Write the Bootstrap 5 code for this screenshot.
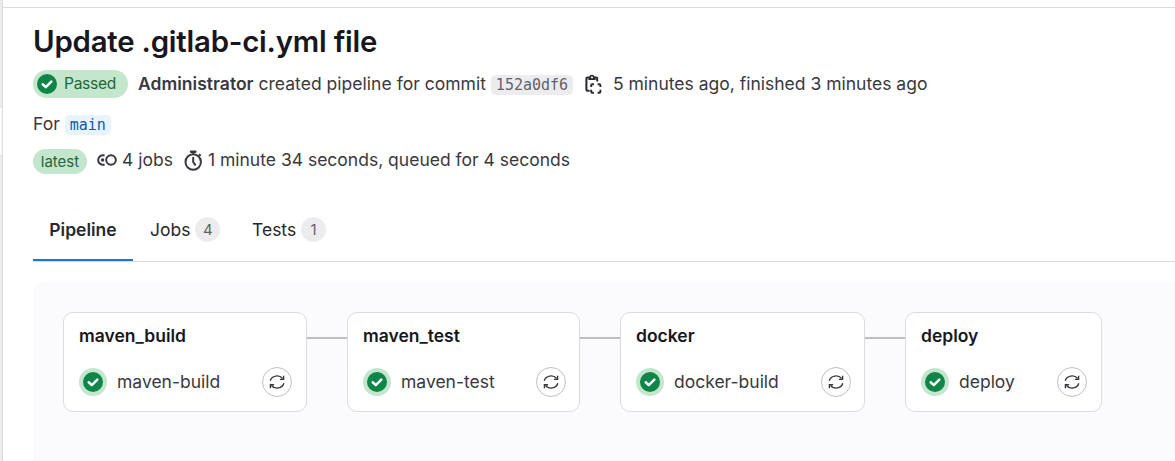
<!DOCTYPE html>
<html lang="en">
<head>
<meta charset="utf-8">
<title>Update .gitlab-ci.yml file</title>
<link href="https://cdn.jsdelivr.net/npm/bootstrap@5.3.0/dist/css/bootstrap.min.css" rel="stylesheet">
<style>
body{font-family:Inter,"Liberation Sans",sans-serif;font-size:17.5px;line-height:25px;color:#3a383f;background:#fff;overflow:hidden}
.shell{height:461px}
.rail{width:3px;border-right:1px solid #dcdcde;background:#ececef}
.rail-gap{margin-top:108px;height:48px;background:#fbfafd;border-bottom:1px solid #dcdcde}
.topline{height:8px;border-bottom:1px solid #dcdcde}
.page{padding-left:30px}
h1{font-size:29.4px;line-height:36px;font-weight:600;color:#18171d;margin:16px 0 0;letter-spacing:-.22px}
.line{white-space:pre}
.l1{height:28px;margin-top:10px}
.l2{height:26px;margin-top:13px}
.l3{height:26px;margin-top:11px}
.lift{margin-top:-2px}
.l3 .lift{margin-top:-3px}
.wide{letter-spacing:.025px}
b{font-weight:600}
.pill{background:#c3e6cd;color:#24663b;border-radius:14px}
.passed{width:95px;height:28px;padding-left:4px;font-size:15.6px;letter-spacing:-.3px}
.latest{width:54px;height:25px;font-size:15px;line-height:23px;padding-bottom:1px;margin-top:1px}
.mono{font-family:"DejaVu Sans Mono","Liberation Mono",monospace;font-size:15px;border-radius:5px;height:20px;line-height:20px;margin-top:1px}
.sha{background:#ececef;color:#626168;width:82px}
.ref{background:#e9f3fc;color:#0b5cad;width:46px}
.tabs{height:64px;margin-top:24px;border-bottom:1px solid #dcdcde;color:#28272d}
.tab-item{height:64px;padding-bottom:2px}
.tab-item.on{width:100px;font-weight:600;border-bottom:2px solid #1f75cb;padding:1px 0 0;height:63px}
.count{width:25px;height:25px;border-radius:50%;background:#ececef;color:#626168;font-size:15px}
.graph{margin-top:20px;height:200px;background:#fbfafd;border-top-left-radius:10px;padding:30px}
.stage{height:100px;border:1px solid #dcdcde;border-radius:10px;background:#fff;padding:10px 14px 0 15px}
.stage.snug{padding-right:13px}
.stage-name{font-weight:600;color:#18171d}
.link-line{width:40px;height:2px;background:#bfbfc3;margin-top:25px}
.job{height:30px;margin-top:19px}
.job-name{margin:-2px 0 0 10px}
.ring{width:28px;height:28px;border-radius:50%;background:#c3e6cd}
.retry{width:30px;height:30px;border:1.25px solid #bfbfc3;border-radius:50%}
svg{display:block;flex:none}
</style>
</head>
<body>
<svg width="0" height="0" class="position-absolute">
<symbol id="ok" viewBox="0 0 20 20"><circle cx="10" cy="10" r="10" fill="#108548"/><path d="M5.7 10.3 8.8 13.1 14.3 7.6" fill="none" stroke="#fff" stroke-width="2.5" stroke-linecap="round" stroke-linejoin="round"/></symbol>
<symbol id="redo" viewBox="0 0 16 16"><g fill="none" stroke="#3a383f" stroke-width="1.35"><path d="M1.2 6.8A7 6.4 0 0 1 13.6 4.5"/><path d="M14.8 9.2A7 6.4 0 0 1 2.4 11.5"/><path d="M14.6 1.8V5.3H10.9M1.4 14.2V10.7H5.1"/></g></symbol>
</svg>
<div class="shell d-flex">
  <div class="rail flex-shrink-0"><div class="rail-gap"></div></div>
  <main class="flex-grow-1">
    <div class="topline"></div>
    <div class="page">
      <h1>Update .gitlab-ci.yml file</h1>
      <div class="line l1 d-flex align-items-center">
        <span class="pill passed d-flex align-items-center"><svg width="20" height="20"><use href="#ok"/></svg><span class="lift" style="margin-left:7px">Passed</span></span>
        <span style="margin-left:10px" class="lift wide"><b>Administrator</b> created pipeline for commit</span>
        <span class="mono sha text-center" style="margin-left:5px">152a0df6</span>
        <svg width="17" height="21" viewBox="0 0 17 21" style="margin-left:12px" fill="none" stroke="#28272d" stroke-width="2"><path d="M4.6 16.8H2.4Q1.4 16.8 1.4 15.8V4.6Q1.4 3.6 2.4 3.6H3.6M10.2 3.6H11.2Q12.2 3.6 12.2 4.6V7.6"/><path d="M4.2 5.2V3.4H5.2A1.8 1.9 0 0 1 8.8 3.4H9.8V5.2Z" stroke-width="1.7"/><path d="M6.2 13.1V11.2Q6.2 10.2 7.2 10.2H8.9M12.6 10.2H14.4Q15.4 10.2 15.4 11.2V13.1M15.4 15.7V17.8Q15.4 18.8 14.4 18.8H12.6M8.9 18.8H7.2Q6.2 18.8 6.2 17.8V15.7" stroke-width="1.9"/></svg>
        <span style="margin-left:11px" class="lift">5 minutes ago, finished 3 minutes ago</span>
      </div>
      <div class="line l2 d-flex align-items-center"><span class="lift">For</span><span class="mono ref text-center" style="margin-left:5px">main</span></div>
      <div class="line l3 d-flex align-items-center">
        <span class="pill latest d-flex align-items-center justify-content-center">latest</span>
        <svg width="21" height="14" viewBox="0 0 21 14" style="margin-left:9px;margin-top:-3px" fill="none" stroke="#3a383f" stroke-width="2"><path d="M8.6 2.5A4.8 4.8 0 1 0 8.6 11.5"/><circle cx="15" cy="7" r="4.8"/><circle cx="6.6" cy="7" r="1.7" fill="#3a383f" stroke="none"/></svg>
        <span class="lift" style="margin-left:5px">4 jobs</span>
        <svg width="19" height="21" viewBox="0 0 19 21" style="margin-left:11px;margin-top:-2px" fill="none" stroke="#3a383f" stroke-width="2"><circle cx="9.2" cy="12" r="7.7"/><path d="M9.2 7.7V12L11.2 14.8" stroke-linecap="round"/><path d="M7 1.7H11.4" stroke-width="2.4" stroke-linecap="round"/><path d="M9.2 1.5V4M14.9 4.2 16.7 5.8"/></svg>
        <span style="margin-left:5px" class="lift">1 minute 34 seconds, queued for 4 seconds</span>
      </div>
      <div class="tabs d-flex">
        <div class="tab-item on d-flex align-items-center justify-content-center">Pipeline</div>
        <div class="tab-item d-flex align-items-center" style="margin-left:17px;width:102px">Jobs<span class="count d-flex align-items-center justify-content-center" style="margin-left:5px">4</span></div>
        <div class="tab-item d-flex align-items-center">Tests<span class="count d-flex align-items-center justify-content-center" style="margin-left:5px">1</span></div>
      </div>
      <div class="graph d-flex">
        <div class="stage" style="width:244px"><div class="stage-name">maven_build</div><div class="job d-flex align-items-center"><span class="ring d-flex align-items-center justify-content-center"><svg width="20" height="20"><use href="#ok"/></svg></span><span class="job-name">maven-build</span><span class="retry ms-auto d-flex align-items-center justify-content-center"><svg width="16" height="16"><use href="#redo"/></svg></span></div></div>
        <div class="link-line"></div>
        <div class="stage snug" style="width:233px"><div class="stage-name">maven_test</div><div class="job d-flex align-items-center"><span class="ring d-flex align-items-center justify-content-center"><svg width="20" height="20"><use href="#ok"/></svg></span><span class="job-name">maven-test</span><span class="retry ms-auto d-flex align-items-center justify-content-center"><svg width="16" height="16"><use href="#redo"/></svg></span></div></div>
        <div class="link-line"></div>
        <div class="stage snug" style="width:245px"><div class="stage-name">docker</div><div class="job d-flex align-items-center"><span class="ring d-flex align-items-center justify-content-center"><svg width="20" height="20"><use href="#ok"/></svg></span><span class="job-name">docker-build</span><span class="retry ms-auto d-flex align-items-center justify-content-center"><svg width="16" height="16"><use href="#redo"/></svg></span></div></div>
        <div class="link-line"></div>
        <div class="stage" style="width:197px"><div class="stage-name">deploy</div><div class="job d-flex align-items-center"><span class="ring d-flex align-items-center justify-content-center"><svg width="20" height="20"><use href="#ok"/></svg></span><span class="job-name">deploy</span><span class="retry ms-auto d-flex align-items-center justify-content-center"><svg width="16" height="16"><use href="#redo"/></svg></span></div></div>
      </div>
    </div>
  </main>
</div>
<script src="https://cdn.jsdelivr.net/npm/bootstrap@5.3.0/dist/js/bootstrap.bundle.min.js"></script>
</body>
</html>
